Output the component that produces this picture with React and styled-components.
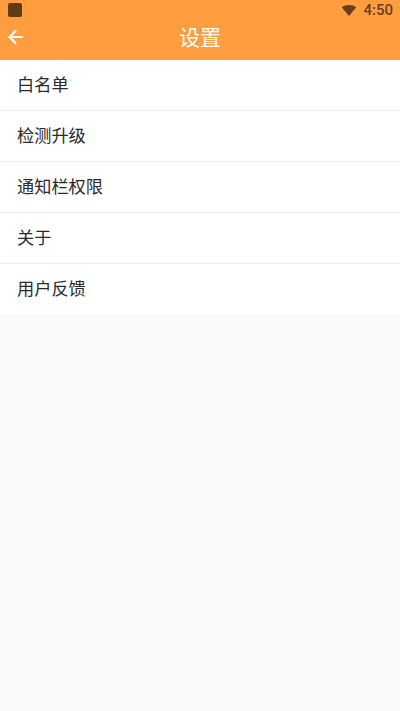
import styled, { createGlobalStyle } from 'styled-components';

const GlobalStyle = createGlobalStyle`
	html, body {
		margin: 0;
		padding: 0;
		background: #fafafa;
		font-family: "Noto Sans CJK SC", "Roboto", sans-serif;
	}
`

const Page = styled.div`
	width: 400px;
	height: 711px;
	overflow: hidden;
	background: #fafafa;
`

const Header = styled.header`
	height: 60px;
	background: #ff9d3f;
	display: flex;
	flex-direction: column;
`

const StatusBar = styled.div`
	height: 20px;
	padding: 0 7px 0 8px;
	display: flex;
	align-items: center;
	justify-content: space-between;
`

const AppBadge = styled.div`
	width: 14px;
	height: 14px;
	border-radius: 2px;
	background: #5f3b16;
`

const StatusRight = styled.div`
	display: flex;
	align-items: center;
	gap: 6px;
`

const Clock = styled.span`
	font-family: Roboto, sans-serif;
	font-weight: 500;
	font-size: 15px;
	line-height: 20px;
	color: #66401a;
`

const TitleBar = styled.div`
	flex: 1;
	position: relative;
	display: flex;
	align-items: center;
	justify-content: center;
	padding-bottom: 8px;
`

const BackButton = styled.div`
	position: absolute;
	left: 7px;
	top: 8px;
	width: 18px;
	height: 18px;
`

const Title = styled.h1`
	margin: 0;
	font-size: 21px;
	font-weight: 400;
	color: #fff;
	line-height: 32px;
`

const List = styled.div`
	background: #fff;
`

const Row = styled.div`
	box-sizing: border-box;
	height: ${p => (p.$last ? '50px' : '51px')};
	padding: 0 0 3px 17px;
	display: flex;
	align-items: center;
	font-size: 17.200px;
	color: #2a2a2a;
	border-bottom: ${p => (p.$last ? 'none' : '1px solid #eeeeee')};
`

const items = ['白名单', '检测升级', '通知栏权限', '关于', '用户反馈']

const App = () => (
	<Page>
		<GlobalStyle />
		<Header>
			<StatusBar>
				<AppBadge />
				<StatusRight>
					<svg width="16" height="11" viewBox="0 0 16 12">
						<path d="M0 2.500C2 .9 5 0 8 0s6 .9 8 2.500L8 12z" fill="#66401a" />
					</svg>
					<Clock>4:50</Clock>
				</StatusRight>
			</StatusBar>
			<TitleBar>
				<BackButton>
					<svg width="18" height="18" viewBox="0 0 18 18" fill="none" stroke="#fff" strokeWidth="2.200">
						<path d="M16 8H2.500M9 1.500L2.500 8 9 14.500" />
					</svg>
				</BackButton>
				<Title>设置</Title>
			</TitleBar>
		</Header>
		<List>
			{items.map((item, i) => (
				<Row key={item} $last={i === items.length - 1}>{item}</Row>
			))}
		</List>
	</Page>
)

export default App
